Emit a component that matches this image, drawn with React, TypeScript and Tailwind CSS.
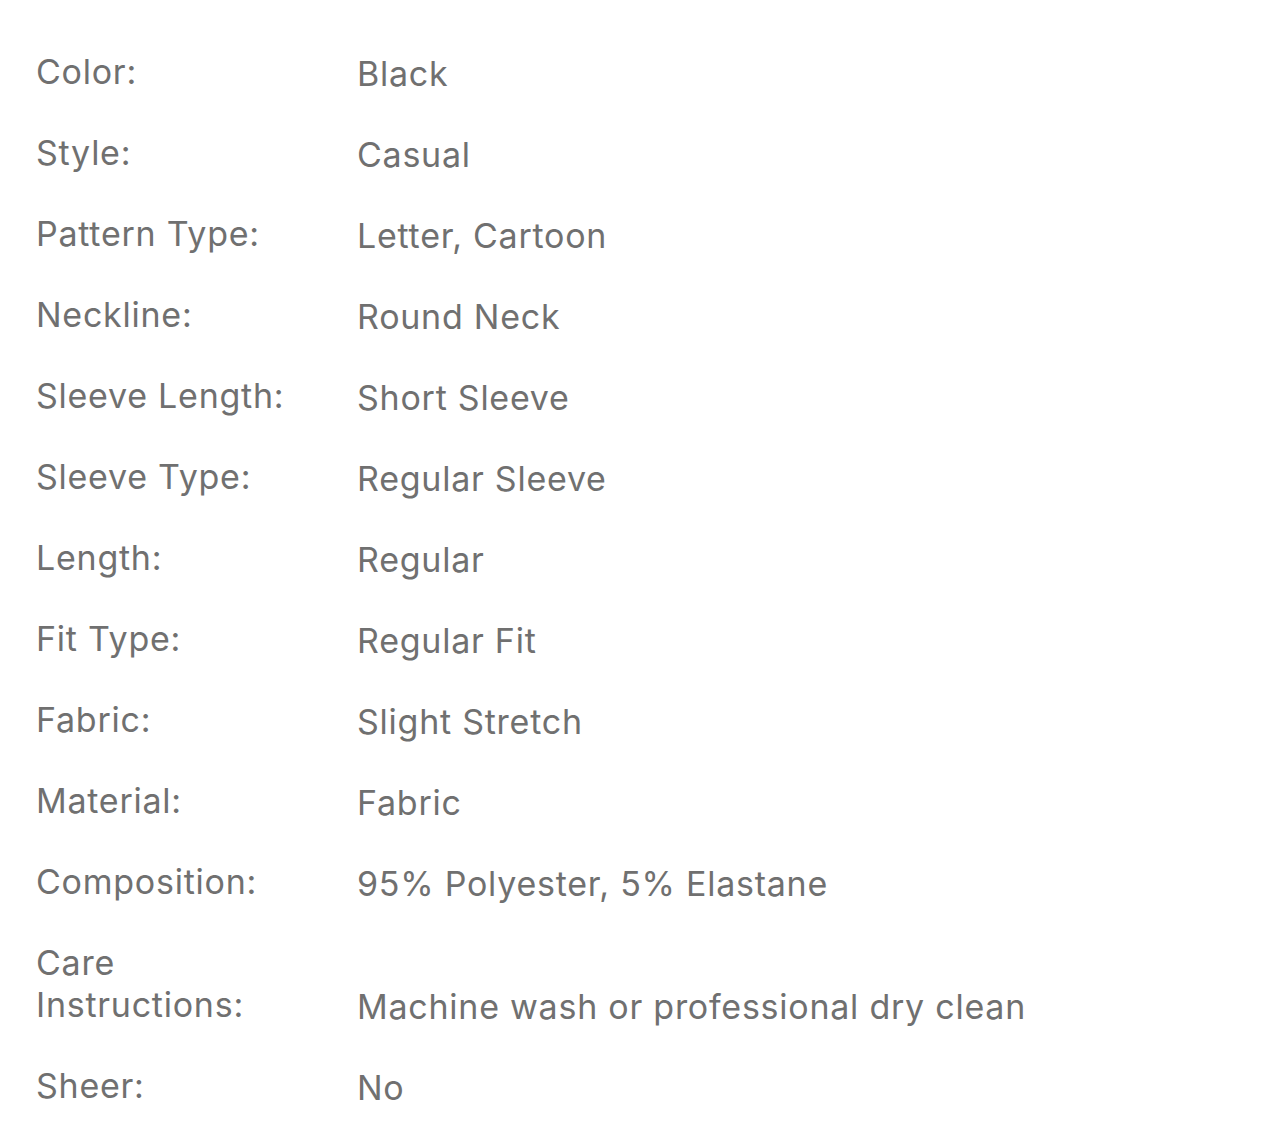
const specs: [string, string][] = [
  ["Color:", "Black"],
  ["Style:", "Casual"],
  ["Pattern Type:", "Letter, Cartoon"],
  ["Neckline:", "Round Neck"],
  ["Sleeve Length:", "Short Sleeve"],
  ["Sleeve Type:", "Regular Sleeve"],
  ["Length:", "Regular"],
  ["Fit Type:", "Regular Fit"],
  ["Fabric:", "Slight Stretch"],
  ["Material:", "Fabric"],
  ["Composition:", "95% Polyester, 5% Elastane"],
  ["Care Instructions:", "Machine wash or professional dry clean"],
  ["Sheer:", "No"],
];

export default function App() {
  return (
    <div
      className="min-h-[1129px] w-full bg-white pl-[36px] pt-[51px] text-[#707070]"
      style={{ fontFamily: "Inter, 'Noto Sans', sans-serif" }}
    >
      <div className="flex flex-col gap-[39px]">
        {specs.map(([label, value]) => (
          <div key={label} className="flex items-end text-[34px] leading-[42px] tracking-[0.75px]">
            <div className="w-[321px] shrink-0">
              <div className="max-w-[270px]">{label}</div>
            </div>
            <div className="mb-[-2px]">{value}</div>
          </div>
        ))}
      </div>
    </div>
  );
}
